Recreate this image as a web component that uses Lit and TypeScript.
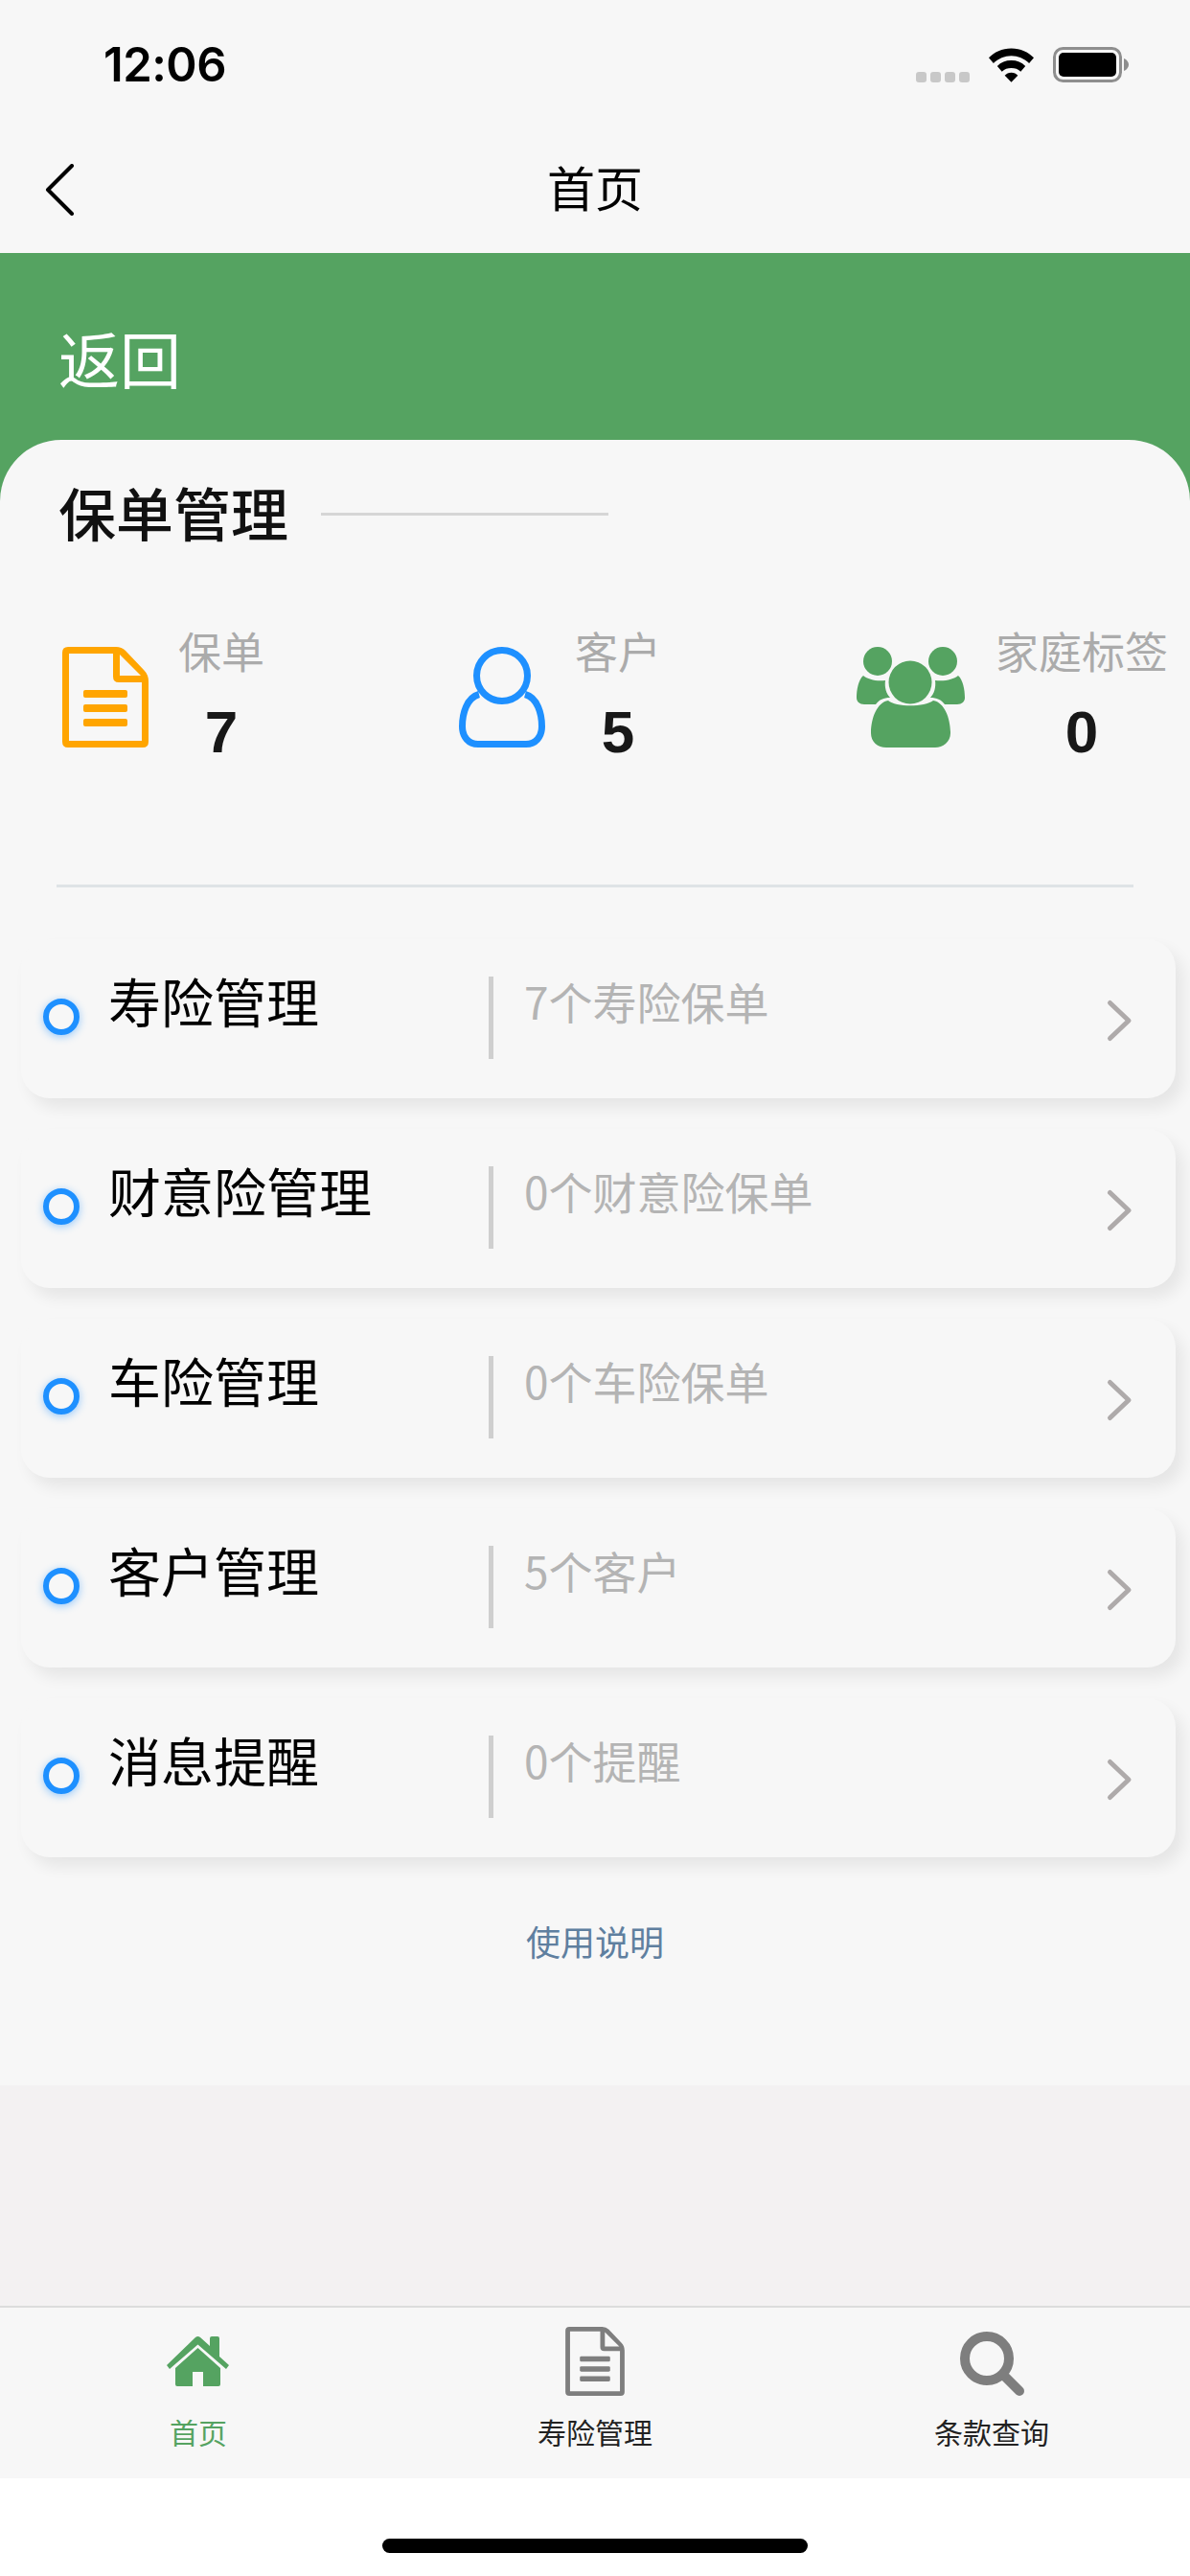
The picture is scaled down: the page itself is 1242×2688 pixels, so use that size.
import { LitElement, html, css } from "lit";
import { customElement } from "lit/decorators.js";

const docIcon = (cls: string) => html`<svg class=${cls} viewBox="0 0 90 105" aria-hidden="true">
  <path fill="currentColor" fill-rule="evenodd" d="M6 0H56Q62 0 66 4L85 24Q90 29 90 36V99Q90 105 84 105H6Q0 105 0 99V6Q0 0 6 0ZM7 7V98H83V37H59Q53 37 53 31V7ZM60 8V30H82Z"/>
  <rect fill="currentColor" x="22" y="45" width="46" height="8" rx="2"/>
  <rect fill="currentColor" x="22" y="60" width="46" height="8" rx="2"/>
  <rect fill="currentColor" x="22" y="75" width="46" height="8" rx="2"/>
</svg>`;

interface Row { title: string; sub: string; }
const rows: Row[] = [
  { title: "寿险管理", sub: "7个寿险保单" },
  { title: "财意险管理", sub: "0个财意险保单" },
  { title: "车险管理", sub: "0个车险保单" },
  { title: "客户管理", sub: "5个客户" },
  { title: "消息提醒", sub: "0个提醒" },
];

@customElement("app-root")
export class AppRoot extends LitElement {
  static styles = css`
    :host {
      display: flex;
      flex-direction: column;
      width: 1242px;
      height: 2688px;
      background: #fff;
      font-family: "Noto Sans CJK SC", "Liberation Sans", sans-serif;
      overflow: hidden;
    }
    .top { background: #f7f7f7; }
    .status {
      height: 132px;
      display: flex;
      align-items: center;
      padding: 3px 64px 0 108px;
      box-sizing: border-box;
    }
    .time {
      font-family: Inter, "Liberation Sans", sans-serif;
      font-weight: 600;
      font-size: 49px;
      letter-spacing: -0.5px;
      color: #000;
      margin-right: auto;
    }
    .signal { display: flex; gap: 4px; margin: 25px 20px 0 0; }
    .signal i { width: 11px; height: 11px; border-radius: 3px; background: #c8c8c8; }
    .wifi { width: 47px; height: 36px; margin-right: 20px; }
    .batt { width: 79px; height: 38px; }
    .nav {
      height: 132px;
      display: grid;
      grid-template-columns: 1fr auto 1fr;
      align-items: center;
      padding: 0 46px;
    }
    .back { width: 34px; height: 54px; }
    .nav-title { font-size: 50px; line-height: 60px; color: #000; margin-top: -8px; }
    .hero { background: #55a361; }
    .hero-label {
      height: 195px;
      padding: 20px 0 0 61px;
      display: flex;
      align-items: center;
      color: #fff;
      font-size: 64px;
      box-sizing: border-box;
    }
    .card {
      background: #f7f7f7;
      border-radius: 64px 64px 0 0;
      height: 1717px;
      box-sizing: border-box;
      padding-top: 40px;
    }
    .section {
      display: flex;
      align-items: center;
      gap: 34px;
      padding-left: 61px;
      height: 74px;
    }
    .section h2 { margin: -4px 0 0; font-size: 60px; font-weight: 500; color: #111; line-height: 74px; }
    .section span { width: 300px; height: 3px; background: #d6d6d6; }
    .stats {
      display: grid;
      grid-template-columns: 414px 414px 1fr;
      padding: 76px 0 0 65px;
      height: 350px;
      box-sizing: border-box;
    }
    .stat { display: flex; align-items: flex-start; gap: 31px; color: #ffa500; }
    .stat svg { flex: none; margin-top: 26px; width: 90px; height: 105px; }
    .stat.blue { color: #1e90ff; }
    .stat.green { color: #55a361; gap: 32px; margin-left: 1px; }
    .stat.green svg { width: 113px; }
    .stat-text { display: flex; flex-direction: column; align-items: center; }
    .stat-label { font-size: 45px; line-height: 60px; color: #ababab; white-space: nowrap; }
    .stat-num {
      font-family: "Liberation Sans", sans-serif;
      font-weight: 700;
      font-size: 62px;
      line-height: 70px;
      margin-top: 20px;
      color: #181818;
    }
    .rule { height: 3px; background: #dfe3e6; margin: 0 59px; }
    .list { display: flex; flex-direction: column; gap: 32px; padding: 54px 15px 0 22px; }
    .row {
      height: 166px;
      border-radius: 30px;
      background: #f7f7f7;
      box-shadow: 8px 10px 16px rgba(0, 0, 0, 0.07);
      display: grid;
      grid-template-columns: 91px 397px 1fr 30px;
      align-items: start;
      padding-right: 44px;
      box-sizing: border-box;
    }
    .dot {
      width: 38px;
      height: 38px;
      margin: 62px 0 0 23px;
      border-radius: 50%;
      border: 6px solid #1e90ff;
      box-sizing: border-box;
      box-shadow: 0 2px 9px rgba(30, 144, 255, 0.45);
    }
    .row-title { font-size: 55px; line-height: 70px; color: #000; margin-top: 28px; white-space: nowrap; }
    .row-sub {
      font-size: 46px;
      line-height: 50px;
      color: #b4b4b4;
      border-left: 5px solid #cfcfcf;
      height: 86px;
      padding-left: 32px;
      box-sizing: border-box;
      margin-top: 39px;
      white-space: nowrap;
    }
    .chev { width: 30px; height: 48px; margin-top: 61px; }
    .help { text-align: center; color: #5f7f9f; font-size: 36px; line-height: 50px; padding-top: 62px; }
    .fill { flex: 1; background: #f3f1f2; }
    .tabs {
      height: 180px;
      background: #f7f7f7;
      border-top: 2px solid #dcdcdc;
      box-sizing: border-box;
      display: grid;
      grid-template-columns: repeat(3, 1fr);
    }
    .tab { display: flex; flex-direction: column; align-items: center; font-size: 30px; color: #222; }
    .tab.active { color: #55a361; }
    .tab-icon { height: 112px; display: flex; align-items: center; justify-content: center; color: #7e7e7e; }
    .tab.active .tab-icon { color: #55a361; }
    .tab-label { line-height: 40px; margin-top: -3px; }
    .t-home { width: 66px; height: 52px; }
    .t-doc { width: 62px; height: 72px; }
    .t-search { width: 67px; height: 67px; margin-top: 5px; }
    .home-area { height: 102px; display: flex; justify-content: center; }
    .home-bar { width: 444px; height: 15px; margin-top: 63px; border-radius: 8px; background: #000; }
  `;

  render() {
    return html`
      <div class="top">
        <div class="status">
          <span class="time">12:06</span>
          <div class="signal"><i></i><i></i><i></i><i></i></div>
          <svg class="wifi" viewBox="0 0 48 36" aria-hidden="true">
            <path d="M24 0C14 0 6 4 0 10L5 16C10 11 17 8 24 8S38 11 43 16L48 10C42 4 34 0 24 0Z"/>
            <path d="M24 13C18 13 13 15 9 19L14 25C17 22 20 21 24 21S31 22 34 25L39 19C35 15 30 13 24 13Z"/>
            <path d="M24 26C21 26 19 27 17 29L24 36L31 29C29 27 27 26 24 26Z"/>
          </svg>
          <svg class="batt" viewBox="0 0 79 38" aria-hidden="true">
            <rect x="1.5" y="1.5" width="69" height="34" rx="9" fill="none" stroke="#8e8e8e" stroke-width="3"/>
            <rect x="6" y="6" width="60" height="25" rx="5" fill="#000"/>
            <path d="M74 12C77 13 79 16 79 18.5S77 24 74 25Z" fill="#8e8e8e"/>
          </svg>
        </div>
        <div class="nav">
          <svg class="back" viewBox="0 0 34 54" aria-hidden="true"><path d="M29 2L4 27L29 52" fill="none" stroke="#000" stroke-width="4" stroke-linecap="round" stroke-linejoin="round"/></svg>
          <span class="nav-title">首页</span>
        </div>
      </div>
      <div class="hero">
        <div class="hero-label">返回</div>
        <div class="card">
          <div class="section"><h2>保单管理</h2><span></span></div>
          <div class="stats">
            <div class="stat">
              ${docIcon("")}
              <div class="stat-text"><span class="stat-label">保单</span><span class="stat-num">7</span></div>
            </div>
            <div class="stat blue">
              <svg viewBox="0 0 90 105" aria-hidden="true">
                <circle cx="45" cy="30" r="26.500" fill="none" stroke="currentColor" stroke-width="7"/>
                <path d="M21 49.500C8 53 3.500 70 3.500 83C3.500 94 10 101.500 20 101.500H70C80 101.500 86.500 94 86.500 83C86.500 70 82 53 69 49.500" fill="none" stroke="currentColor" stroke-width="7"/>
              </svg>
              <div class="stat-text"><span class="stat-label">客户</span><span class="stat-num">5</span></div>
            </div>
            <div class="stat green">
              <svg viewBox="0 0 113 105" aria-hidden="true">
                <circle cx="22" cy="15" r="15" fill="currentColor"/>
                <circle cx="90" cy="15" r="15" fill="currentColor"/>
                <circle cx="56" cy="37" r="22.500" fill="currentColor"/>
                <path fill="currentColor" d="M7 30C12 34 20 36 30 35C29 42 31 49 35 53C28 53 24 55 20 60H8C3 60 0 57 0 53C0 45 2 34 7 30Z"/>
                <path fill="currentColor" d="M106 30C101 34 93 36 82 35C83 42 81 49 77 53C84 53 88 55 92 60H105C110 60 113 57 113 53C113 45 111 34 106 30Z"/>
                <path fill="currentColor" d="M33 56C41 63 71 63 80 56C92 58 98 75 98 90C98 99 90 105 82 105H31C22 105 15 99 15 90C15 75 21 58 33 56Z"/>
              </svg>
              <div class="stat-text"><span class="stat-label">家庭标签</span><span class="stat-num">0</span></div>
            </div>
          </div>
          <div class="rule"></div>
          <div class="list">
            ${rows.map(
              (r) => html`<div class="row">
                <span class="dot"></span>
                <span class="row-title">${r.title}</span>
                <span class="row-sub">${r.sub}</span>
                <svg class="chev" viewBox="0 0 30 48" aria-hidden="true"><path d="M5.500 5.500L25 24L5.500 42.500" fill="none" stroke="#aeaaaa" stroke-width="5" stroke-linecap="round" stroke-linejoin="round"/></svg>
              </div>`
            )}
          </div>
          <div class="help">使用说明</div>
        </div>
      </div>
      <div class="fill"></div>
      <div class="tabs">
        <div class="tab active">
          <div class="tab-icon">
            <svg class="t-home" viewBox="0 0 66 52" aria-hidden="true">
              <path fill="currentColor" d="M30 1Q32.500 -1 35 1L45 10V2Q45 0 47 0H53Q55 0 55 2V21L65 30L62 34L32.500 8.500L3 34L0 30Z"/>
              <path fill="currentColor" d="M32.500 12L56 33V50Q56 52 54 52H38V37H27V52H11Q9 52 9 50V33Z"/>
            </svg>
          </div>
          <span class="tab-label">首页</span>
        </div>
        <div class="tab">
          <div class="tab-icon">${docIcon("t-doc")}</div>
          <span class="tab-label">寿险管理</span>
        </div>
        <div class="tab">
          <div class="tab-icon">
            <svg class="t-search" viewBox="0 0 67 67" aria-hidden="true">
              <circle cx="28" cy="28" r="23" fill="none" stroke="currentColor" stroke-width="10"/>
              <path d="M45 45L62 62" stroke="currentColor" stroke-width="10" stroke-linecap="round"/>
            </svg>
          </div>
          <span class="tab-label">条款查询</span>
        </div>
      </div>
      <div class="home-area"><div class="home-bar"></div></div>
    `;
  }
}
